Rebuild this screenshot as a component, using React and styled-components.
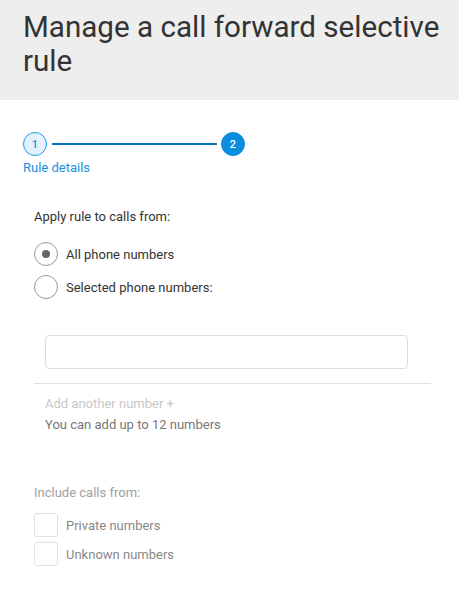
import React from 'react';
import styled, { createGlobalStyle } from 'styled-components';

const GlobalStyle = createGlobalStyle`
  body {
    margin: 0;
    background: #fff;
    font-family: Roboto, "Noto Sans", sans-serif;
    color: #333;
  }
`;

const Header = styled.header`
  background: #eeeeee;
  height: 100px;
  box-sizing: border-box;
  padding: 10px 12px 0 23px;
`;

const Title = styled.h1`
  margin: 0;
  font-size: 29.6px;
  line-height: 34px;
  font-weight: 400;
  color: #333;
`;

const Body = styled.main`
  padding: 32px 28px 0 23px;
`;

const Stepper = styled.div`
  display: flex;
  align-items: center;
  width: 222px;
`;

const StepDot = styled.div`
  width: 24px;
  height: 24px;
  box-sizing: border-box;
  border-radius: 50%;
  display: flex;
  align-items: center;
  justify-content: center;
  font-size: 11px;
  font-weight: 500;
  flex: none;
  background: ${p => (p.$active ? '#e3f2fd' : '#0a8ddc')};
  border: 1px solid ${p => (p.$active ? '#1e9be8' : '#0a8ddc')};
  color: ${p => (p.$active ? '#2a8ed6' : '#fff')};
`;

const StepLine = styled.div`
  flex: 1;
  height: 2px;
  margin: 0 4px 0 5px;
  background: #0274b8;
`;

const StepLabel = styled.div`
  margin-top: 4px;
  font-size: 13px;
  line-height: 16px;
  color: #1a8fe0;
`;

const Form = styled.section`
  padding: 33px 0 0 11px;
`;

const Label = styled.div`
  font-size: 13px;
  line-height: 16px;
  color: ${p => p.$muted ? '#a0a0a0' : '#333'};
`;

const Options = styled.div`
  display: flex;
  flex-direction: column;
  gap: 9px;
  margin-top: 17px;
`;

const Option = styled.label`
  display: flex;
  align-items: center;
  gap: 8px;
  font-size: 13px;
  color: ${p => p.$muted ? '#888' : '#333'};
`;

const Radio = styled.span`
  width: 24px;
  height: 24px;
  box-sizing: border-box;
  border-radius: 50%;
  border: 1px solid #999;
  display: flex;
  align-items: center;
  justify-content: center;

  &::after {
    content: '';
    width: 8px;
    height: 8px;
    border-radius: 50%;
    background: ${p => (p.$checked ? '#666' : 'transparent')};
  }
`;

const Checkbox = styled.span`
  width: 24px;
  height: 24px;
  box-sizing: border-box;
  border-radius: 3px;
  border: 1px solid #e0e0e0;
`;

const NumberBox = styled.div`
  margin: 36px 23px 0 11px;
`;

const Input = styled.input`
  display: block;
  width: 100%;
  height: 34px;
  box-sizing: border-box;
  border: 1px solid #dcdcdc;
  border-radius: 4px;
  outline: none;
  font: inherit;
`;

const Divider = styled.hr`
  border: none;
  border-top: 1px solid #e0e0e0;
  margin: 14px 0 0;
`;

const Links = styled.div`
  padding: 9px 0 0 11px;
  font-size: 13px;
  line-height: 21px;
`;

const AddLink = styled.div`
  color: #c8c8c8;
`;

const Hint = styled.div`
  color: #777;
`;

const Include = styled.section`
  margin-top: 50px;
`;

const CheckList = styled(Options)`
  gap: 5px;
  margin-top: 12px;
`;

export default function App() {
  return (
    <>
      <GlobalStyle />
      <Header>
        <Title>Manage a call forward selective rule</Title>
      </Header>
      <Body>
        <Stepper>
          <StepDot $active>1</StepDot>
          <StepLine />
          <StepDot>2</StepDot>
        </Stepper>
        <StepLabel>Rule details</StepLabel>

        <Form>
          <Label>Apply rule to calls from:</Label>
          <Options>
            <Option><Radio $checked />All phone numbers</Option>
            <Option><Radio />Selected phone numbers:</Option>
          </Options>

          <NumberBox>
            <Input />
          </NumberBox>
          <Divider />
          <Links>
            <AddLink>Add another number +</AddLink>
            <Hint>You can add up to 12 numbers</Hint>
          </Links>

          <Include>
            <Label $muted>Include calls from:</Label>
            <CheckList>
              <Option $muted><Checkbox />Private numbers</Option>
              <Option $muted><Checkbox />Unknown numbers</Option>
            </CheckList>
          </Include>
        </Form>
      </Body>
    </>
  );
}
